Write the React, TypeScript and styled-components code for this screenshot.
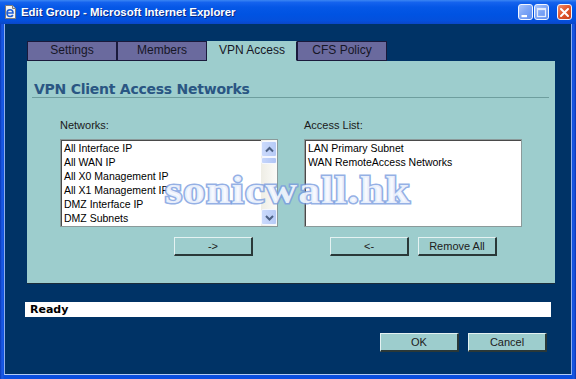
import styled, { createGlobalStyle } from "styled-components";

const GlobalStyle = createGlobalStyle`
  html, body {
    margin: 0;
    padding: 0;
    background: #003366;
  }
  body {
    font-family: "Liberation Sans", Arial, sans-serif;
  }
`;

const networks = [
  "All Interface IP",
  "All WAN IP",
  "All X0 Management IP",
  "All X1 Management IP",
  "DMZ Interface IP",
  "DMZ Subnets",
];

const accessList = ["LAN Primary Subnet", "WAN RemoteAccess Networks"];

const tabs = ["Settings", "Members", "VPN Access", "CFS Policy"];

const ChevronIcon = ({ down }: { down?: boolean }) => (
  <svg width="9" height="7" viewBox="0 0 9 7">
    <polyline
      points={down ? "1,2 4.5,5.5 8,2" : "1,5.5 4.5,2 8,5.5"}
      fill="none"
      stroke="#4d6185"
      strokeWidth="2"
    />
  </svg>
);

const PageIcon = () => (
  <svg width="13" height="14" viewBox="0 0 13 14">
    <path d="M1.5 0.5 H8.5 L11.5 3.5 V13.5 H1.5 Z" fill="#f4f4f4" stroke="#7a7a7a" />
    <path d="M8.5 0.5 V3.5 H11.5" fill="#d8d8d8" stroke="#7a7a7a" />
    <path
      d="M3 8 H9 C9 5.8 7.8 4.8 6 4.8 C4.2 4.8 3 6.2 3 8.2 C3 10.3 4.3 11.5 6.1 11.5 C7.4 11.5 8.4 10.9 8.9 10"
      fill="none"
      stroke="#1d5fd6"
      strokeWidth="1.6"
    />
  </svg>
);

export default function App() {
  return (
    <>
      <GlobalStyle />
      <Window>
        <TitleBar>
          <PageIcon />
          <Title>Edit Group - Microsoft Internet Explorer</Title>
          <Controls>
            <CtrlButton>
              <svg width="13" height="13" viewBox="0 0 13 13">
                <rect x="2.5" y="9" width="5.5" height="2.2" fill="#fff" />
              </svg>
            </CtrlButton>
            <CtrlButton>
              <svg width="13" height="13" viewBox="0 0 13 13">
                <rect x="2.5" y="2.5" width="8" height="8" fill="none" stroke="#e4ecfb" strokeWidth="1.2" />
                <rect x="2.5" y="2.5" width="8" height="1.6" fill="#e4ecfb" />
              </svg>
            </CtrlButton>
            <CtrlButton $close>
              <svg width="13" height="13" viewBox="0 0 13 13">
                <path d="M3 3 L10 10 M10 3 L3 10" stroke="#fff" strokeWidth="2" strokeLinecap="round" />
              </svg>
            </CtrlButton>
          </Controls>
        </TitleBar>

        <Client>
          <TabStrip>
            {tabs.map((t) => (
              <Tab key={t} $active={t === "VPN Access"}>
                {t}
              </Tab>
            ))}
          </TabStrip>

          <Panel>
            <Heading>VPN Client Access Networks</Heading>
            <Columns>
              <Column>
                <FieldLabel>Networks:</FieldLabel>
                <ListBox>
                  <Items>
                    {networks.map((n) => (
                      <Item key={n}>{n}</Item>
                    ))}
                  </Items>
                  <ScrollTrack>
                    <ScrollButton>
                      <ChevronIcon />
                    </ScrollButton>
                    <ScrollThumb />
                    <ScrollSpacer />
                    <ScrollButton>
                      <ChevronIcon down />
                    </ScrollButton>
                  </ScrollTrack>
                </ListBox>
                <ButtonRow $offset={114}>
                  <PanelButton>-&gt;</PanelButton>
                </ButtonRow>
              </Column>
              <Column>
                <FieldLabel>Access List:</FieldLabel>
                <ListBox>
                  <Items>
                    {accessList.map((n) => (
                      <Item key={n}>{n}</Item>
                    ))}
                  </Items>
                </ListBox>
                <ButtonRow $offset={26}>
                  <PanelButton>&lt;-</PanelButton>
                  <PanelButton>Remove All</PanelButton>
                </ButtonRow>
              </Column>
            </Columns>
          </Panel>

          <StatusBar>Ready</StatusBar>

          <Footer>
            <PanelButton>OK</PanelButton>
            <PanelButton>Cancel</PanelButton>
          </Footer>
        </Client>

        <Watermark>sonicwall.hk</Watermark>
      </Window>
    </>
  );
}

const Window = styled.div`
  position: relative;
  width: 576px;
  height: 379px;
  display: flex;
  flex-direction: column;
  background: linear-gradient(to right, #0838b8 0px, #1e5ce6 2px, #0b4fdf 4px, #0b4fdf 572px, #1b58e0 574px, #0734b0 576px);
  overflow: hidden;
`;

const TitleBar = styled.div`
  height: 24px;
  flex: none;
  display: flex;
  align-items: center;
  padding: 0 4px 0 4px;
  box-sizing: border-box;
  background: linear-gradient(
    to bottom,
    #3b86f3 0%,
    #1563ee 10%,
    #0557e6 30%,
    #0053e2 60%,
    #0450dc 85%,
    #0a47c8 100%
  );
`;

const Title = styled.span`
  margin-left: 4px;
  color: #fff;
  font: bold 11.4px "Liberation Sans", Arial, sans-serif;
  text-shadow: 1px 1px 0 #0b2a86;
  white-space: nowrap;
`;

const Controls = styled.div`
  margin-left: auto;
  display: flex;
  align-items: center;
  gap: 1px;
`;

const CtrlButton = styled.div<{ $close?: boolean }>`
  width: 15px;
  height: 16px;
  box-sizing: border-box;
  border: 1px solid #f2f6ff;
  border-radius: 3px;
  display: flex;
  align-items: center;
  justify-content: center;
  margin-left: ${(p) => (p.$close ? "7px" : "0")};
  background: ${(p) =>
    p.$close
      ? "linear-gradient(135deg, #f09070 0%, #e2582e 45%, #c8401c 100%)"
      : "linear-gradient(135deg, #a8c4fb 0%, #7ea6f6 45%, #5f8ff0 100%)"};
`;

const Client = styled.div`
  flex: 1;
  margin: 0 4px 4px 4px;
  background: #003366;
  border-left: 1px solid #8fb0ee;
  border-right: 1px solid #8fb0ee;
  border-bottom: 1px solid #b3cdf7;
  padding-top: 17px;
  display: flex;
  flex-direction: column;
`;

const TabStrip = styled.div`
  display: flex;
  margin-left: 22px;
  height: 20px;
`;

const Tab = styled.div<{ $active?: boolean }>`
  width: 90px;
  height: 20px;
  box-sizing: border-box;
  background: ${(p) => (p.$active ? "#9dcdcd" : "#6a6a9e")};
  border-left: 1px solid ${(p) => (p.$active ? "#9dcdcd" : "#1a1a3c")};
  border-top: 1px solid ${(p) => (p.$active ? "#9dcdcd" : "#1a1a3c")};
  border-bottom: 1px solid ${(p) => (p.$active ? "#9dcdcd" : "#1a1a3c")};
  border-right: 1px solid #1a1a3c;
  color: #161626;
  font-size: 12px;
  line-height: 14px;
  padding-top: 1px;
  text-align: center;
  white-space: nowrap;
`;

const Panel = styled.section`
  width: 528px;
  height: 223px;
  box-sizing: border-box;
  margin-left: 22px;
  background: #9dcdcd;
  border-bottom: 1px solid #1c2c3a;
  padding: 20px 6px 0 5px;
`;

const Heading = styled.h2`
  margin: 0;
  padding-left: 2px;
  height: 16px;
  font: bold 14px "DejaVu Sans", Verdana, sans-serif;
  letter-spacing: -0.25px;
  line-height: 16px;
  color: #2a5683;
  border-bottom: 1px solid #6e9e9e;
`;

const Columns = styled.div`
  display: grid;
  grid-template-columns: 218px 218px;
  column-gap: 26px;
  margin: 21px 0 0 28px;
`;

const Column = styled.div`
  display: flex;
  flex-direction: column;
`;

const FieldLabel = styled.div`
  font-size: 11px;
  line-height: 13px;
  color: #1a1a1a;
  margin-bottom: 7px;
`;

const ListBox = styled.div`
  height: 88px;
  box-sizing: border-box;
  background: #fff;
  border: 1px solid #8b9a9a;
  box-shadow: inset 1px 1px 0 #4a4a4a;
  display: flex;
  overflow: hidden;
`;

const Items = styled.div`
  flex: 1;
  padding: 1px 0 0 3px;
`;

const Item = styled.div`
  font-size: 10.5px;
  line-height: 14px;
  color: #000;
  white-space: nowrap;
`;

const ScrollTrack = styled.div`
  width: 16px;
  flex: none;
  background: linear-gradient(to right, #eeede5, #fbfbf8);
  display: flex;
  flex-direction: column;
  padding: 1px 0;
  box-sizing: border-box;
`;

const ScrollButton = styled.div`
  height: 16px;
  flex: none;
  box-sizing: border-box;
  border: 1px solid #f4f7ff;
  border-radius: 2px;
  background: linear-gradient(to right, #cbdafc, #b6caf6);
  display: flex;
  align-items: center;
  justify-content: center;
`;

const ScrollThumb = styled.div`
  height: 7px;
  flex: none;
  box-sizing: border-box;
  border: 1px solid #f4f7ff;
  border-radius: 2px;
  background: linear-gradient(to right, #c6d6fb, #b0c5f5);
`;

const ScrollSpacer = styled.div`
  flex: 1;
`;

const ButtonRow = styled.div<{ $offset: number }>`
  display: flex;
  gap: 9px;
  margin: 10px 0 0 ${(p) => p.$offset}px;
`;

const PanelButton = styled.button`
  width: 79px;
  height: 19px;
  box-sizing: border-box;
  padding: 0;
  background: #9dcdcd;
  border-style: solid;
  border-width: 1px 2px 2px 1px;
  border-color: #e4f2f2 #2a3838 #2a3838 #e4f2f2;
  font: 11px "Liberation Sans", Arial, sans-serif;
  color: #202020;
`;

const StatusBar = styled.div`
  margin: 18px 0 0 20px;
  width: 526px;
  height: 15px;
  box-sizing: border-box;
  background: #fff;
  padding-left: 5px;
  font: bold 11px "DejaVu Sans", Verdana, sans-serif;
  line-height: 15px;
  color: #000;
`;

const Footer = styled.div`
  display: flex;
  justify-content: flex-end;
  gap: 9px;
  margin-top: 16px;
  padding-right: 24px;
`;

const Watermark = styled.div`
  position: absolute;
  left: 165px;
  top: 171px;
  font: bold 38px "Liberation Serif", "Times New Roman", serif;
  line-height: 38px;
  letter-spacing: 1px;
  color: rgba(246, 249, 255, 0.9);
  -webkit-text-stroke: 3px rgba(120, 155, 222, 0.8);
  paint-order: stroke fill;
  transform: scaleX(1.15);
  transform-origin: left top;
  white-space: nowrap;
  pointer-events: none;
`;
